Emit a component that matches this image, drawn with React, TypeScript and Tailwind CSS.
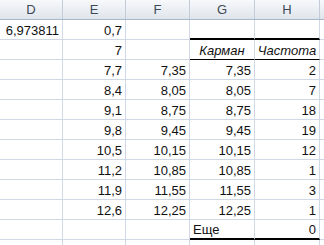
const cols = [
  { key: 'D', w: 'w-[63px]' },
  { key: 'E', w: 'w-[63px]' },
  { key: 'F', w: 'w-[64px]' },
  { key: 'G', w: 'w-[65px]' },
  { key: 'H', w: 'w-[65px]' },
  { key: 'I', w: 'w-[20px]' },
]

type Cell = { v?: string; align?: 'left' | 'right' | 'center'; italic?: boolean }

const bins = ['7,35', '8,05', '8,75', '9,45', '10,15', '10,85', '11,55', '12,25']
const edges = ['7,7', '8,4', '9,1', '9,8', '10,5', '11,2', '11,9', '12,6']
const freq = ['2', '7', '18', '19', '12', '1', '3', '1']

const rows: Cell[][] = [
  [{ v: '6,973811' }, { v: '0,7' }, {}, {}, {}, {}],
  [{}, { v: '7' }, {}, { v: 'Карман', align: 'center', italic: true }, { v: 'Частота', align: 'center', italic: true }, {}],
  ...edges.map((e, i) => [{}, { v: e }, { v: bins[i] }, { v: bins[i] }, { v: freq[i] }, {}]),
  [{}, {}, {}, { v: 'Еще', align: 'left' }, { v: '0' }, {}],
  [{}, {}, {}, {}, {}, {}],
]

// borders drawn around the bin table in G:H
function edgeClass(r: number, c: number) {
  const inTable = c === 3 || c === 4
  if (!inTable) return 'border-b border-[#d0d7e5]'
  if (r === 0) return 'border-b-2 border-black'
  if (r === 1) return 'border-b border-black'
  if (r === 10) return 'border-b-2 border-black'
  return 'border-b border-[#d0d7e5]'
}

export default function App() {
  return (
    <div className="h-[245px] w-[324px] overflow-hidden bg-white font-['Liberation_Sans',Arial,sans-serif] text-[13px] text-[#111]">
      <div className="flex h-[20px] border-b border-[#a9b8c9] bg-gradient-to-b from-[#f7f9fb] to-[#dfe5ec]">
        {cols.map((c) => (
          <div
            key={c.key}
            className={`${c.w} flex shrink-0 items-center justify-center border-r border-[#c3ccd7] pt-[1px] text-[13px] text-[#3e4a58]`}
          >
            {c.key !== 'I' ? c.key : ''}
          </div>
        ))}
      </div>
      {rows.map((row, r) => (
        <div key={r} className="flex h-[20px]">
          {row.map((cell, c) => (
            <div
              key={c}
              className={`${cols[c].w} flex shrink-0 items-end overflow-visible whitespace-nowrap border-r border-r-[#d0d7e5] px-[3px] pb-[2px] leading-none ${edgeClass(r, c)} ${
                cell.align === 'center' ? 'justify-center' : cell.align === 'left' ? 'justify-start' : 'justify-end'
              } ${cell.italic ? 'italic' : ''}`}
            >
              {cell.v}
            </div>
          ))}
        </div>
      ))}
    </div>
  )
}
